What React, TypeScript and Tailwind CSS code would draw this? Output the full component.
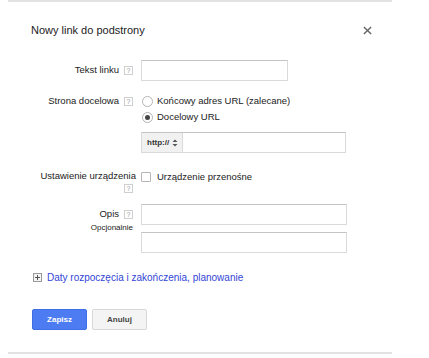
import React from "react";

const font = { fontFamily: '"Liberation Sans", Arial, sans-serif' };

const Help = () => (
  <span className="inline-flex w-[9px] h-[9px] items-center justify-center border border-[#cfcfcf] text-[7px] leading-none text-[#999] bg-white">
    ?
  </span>
);

const Radio = ({ checked }: { checked?: boolean }) => (
  <span className="w-[11px] h-[11px] rounded-full border border-[#b5b5b5] bg-white flex items-center justify-center shrink-0">
    {checked && <span className="w-[5px] h-[5px] rounded-full bg-[#444]" />}
  </span>
);

const inputCls = "h-[21px] border border-[#dadada] border-t-[#c4c4c4] bg-white";

export default function App() {
  return (
    <div className="w-[429px] h-[358px] bg-white text-[#222]" style={font}>
      <div className="ml-[8px] w-[384px] h-[354px] border-t-2 border-b-2 border-[#e2e2e2] flex flex-col pl-[23px] pr-[22px]">
        {/* header */}
        <div className="flex items-center justify-between pt-[21px] h-[35px]">
          <span className="text-[11px] leading-[14px] text-[#222]">Nowy link do podstrony</span>
          <svg width="9" height="9" viewBox="0 0 10 10" className="mr-[-2px]">
            <path d="M1 1 L9 9 M9 1 L1 9" stroke="#666" strokeWidth="1.6" />
          </svg>
        </div>

        {/* Tekst linku */}
        <div className="flex items-center mt-[23px] text-[9.5px]">
          <div className="w-[102px] flex items-center justify-end gap-[5px]">
            <span>Tekst linku</span>
            <Help />
          </div>
          <div className={`${inputCls} w-[147px] ml-[8px]`} />
        </div>

        {/* Strona docelowa */}
        <div className="flex mt-[12px] text-[9.5px]">
          <div className="w-[102px] h-[16px] flex items-center justify-end gap-[5px]">
            <span>Strona docelowa</span>
            <Help />
          </div>
          <div className="ml-[8px] flex flex-col">
            <div className="h-[16px] flex items-center gap-[4px] pl-[1px]">
              <Radio />
              <span>Końcowy adres URL (zalecane)</span>
            </div>
            <div className="h-[16px] flex items-center gap-[4px] pl-[1px]">
              <Radio checked />
              <span>Docelowy URL</span>
            </div>
            <div className={`${inputCls} h-[21px] w-[205px] mt-[7px] flex`}>
              <div className="w-[41px] h-full bg-[#f1f1f1] border-r border-[#dadada] flex items-center pl-[5px] gap-[3px]">
                <span className="text-[8px] font-bold text-[#333]">http://</span>
                <svg width="6" height="8" viewBox="0 0 6 8">
                  <path d="M0.5 3 L3 0.5 L5.5 3 Z M0.5 5 L3 7.5 L5.5 5 Z" fill="#555" />
                </svg>
              </div>
            </div>
          </div>
        </div>

        {/* Ustawienie urządzenia */}
        <div className="flex mt-[17px] text-[9.5px]">
          <div className="w-[102px] flex flex-col items-end leading-[12px]">
            <span className="mr-[-3px] whitespace-nowrap">Ustawienie urządzenia</span>
            <span className="h-[12px] flex items-center">
              <Help />
            </span>
          </div>
          <div className="ml-[8px] h-[12px] flex items-center gap-[6px] mt-[1px]">
            <span className="w-[10px] h-[10px] border border-[#b5b5b5] rounded-[1px] bg-white" />
            <span>Urządzenie przenośne</span>
          </div>
        </div>

        {/* Opis */}
        <div className="flex mt-[10px] text-[9.5px]">
          <div className="w-[102px] flex flex-col items-end">
            <div className="h-[21px] flex items-center gap-[5px]">
              <span>Opis</span>
              <Help />
            </div>
            <span className="text-[8px] leading-[9px] mt-[-2px]">Opcjonalnie</span>
          </div>
          <div className="ml-[8px] flex flex-col gap-[7px]">
            <div className={`${inputCls} w-[206px]`} />
            <div className={`${inputCls} w-[206px]`} />
          </div>
        </div>

        {/* link */}
        <div className="flex items-center gap-[5px] mt-[17px] h-[14px] ml-[2px]">
          <svg width="9" height="9" viewBox="0 0 9 9">
            <rect x="0.5" y="0.5" width="8" height="8" fill="#f4f4f4" stroke="#9a9a9a" />
            <path d="M2 4.5 H7 M4.5 2 V7" stroke="#555" strokeWidth="1" />
          </svg>
          <span className="text-[10px] text-[#3245d6]">Daty rozpoczęcia i zakończenia, planowanie</span>
        </div>

        {/* buttons */}
        <div className="flex gap-[5px] mt-[25px] ml-[1px]">
          <button className="w-[55px] h-[21px] rounded-[2px] bg-[#4c7bf2] border border-[#3f6fe6] text-white text-[8px] font-bold">
            Zapisz
          </button>
          <button className="w-[55px] h-[21px] rounded-[2px] bg-[#f4f4f4] border border-[#d8d8d8] text-[#444] text-[8px] font-bold">
            Anuluj
          </button>
        </div>
      </div>
    </div>
  );
}
